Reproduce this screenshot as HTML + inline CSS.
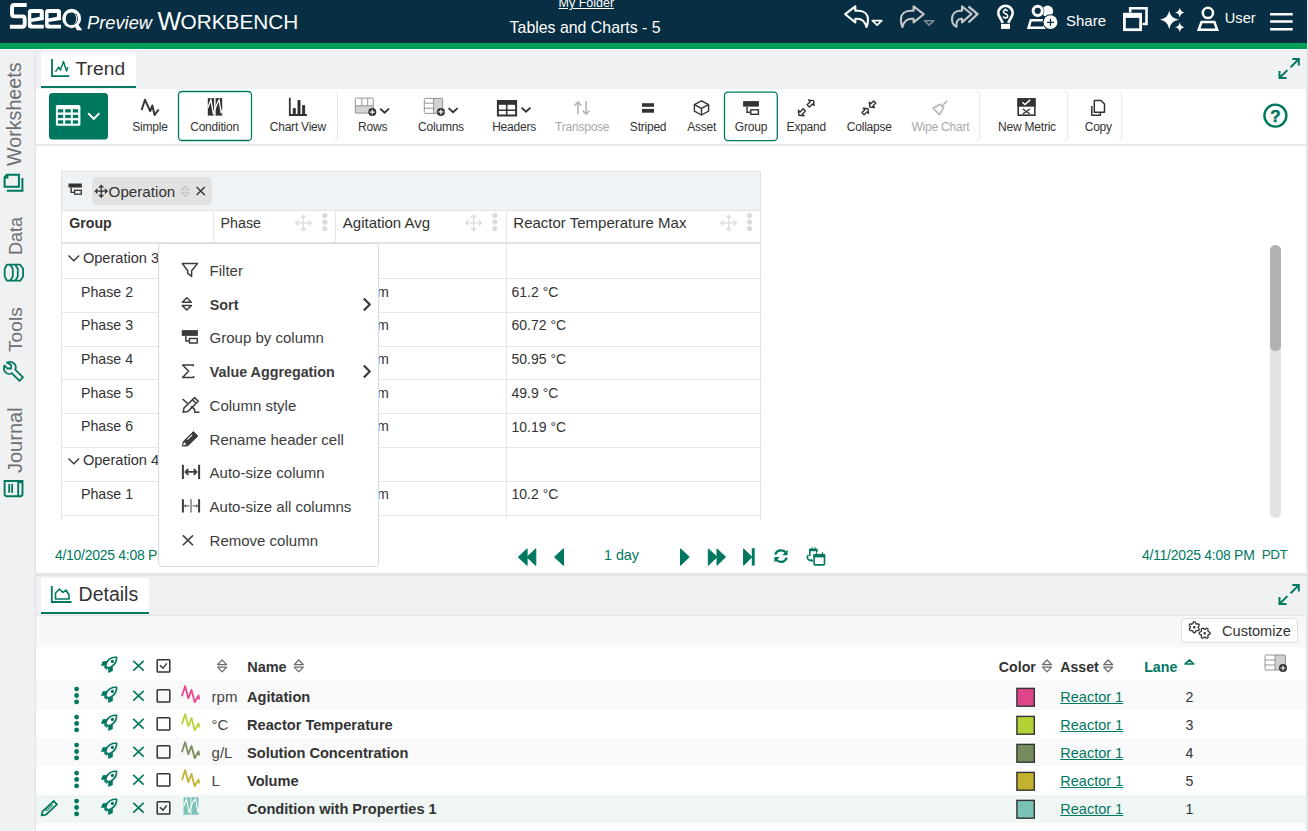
<!DOCTYPE html><html><head><meta charset="utf-8"><style>
html,body{margin:0;padding:0;}
body{width:1308px;height:831px;position:relative;overflow:hidden;background:#fff;font-family:"Liberation Sans",sans-serif;}
.t{position:absolute;white-space:nowrap;}
.r{position:absolute;}
</style></head><body>
<div class="r" style="left:0px;top:0px;width:1308px;height:831px;background:#f0f1f3"></div>
<div class="r" style="left:0px;top:0px;width:1307px;height:42.5px;background:#072e42"></div>
<div class="r" style="left:0px;top:42.5px;width:1307px;height:6.5px;background:#00a059"></div>
<div class="r" style="left:0px;top:49px;width:1308px;height:1px;background:#fff"></div>
<div class="r" style="left:35px;top:50px;width:1px;height:781px;background:#dfe1e4"></div>
<div class="r" style="left:41px;top:52px;width:95px;height:36px;background:#fff"></div>
<div class="r" style="left:41px;top:86px;width:95px;height:2px;background:#00785f"></div>
<div class="r" style="left:36px;top:89px;width:1270px;height:483.5px;background:#fff"></div>
<div class="r" style="left:36px;top:144px;width:1270px;height:2px;background:#e6e7e9"></div>
<div class="r" style="left:1306px;top:50px;width:2px;height:781px;background:#e6e6e6"></div>
<div class="r" style="left:1307px;top:0px;width:1px;height:50px;background:#e6e6e6"></div>
<div class="r" style="left:36px;top:572.5px;width:1270px;height:3.5px;background:#e4e5e7"></div>
<div class="r" style="left:41px;top:578px;width:108px;height:35px;background:#fff"></div>
<div class="r" style="left:41px;top:612px;width:108px;height:2.2px;background:#00785f"></div>
<div class="r" style="left:36px;top:614.5px;width:1269px;height:1px;background:#e3e4e6"></div>
<div class="r" style="left:36px;top:615.5px;width:1270px;height:31.5px;background:#f8f8f8"></div>
<div class="r" style="left:36px;top:647px;width:1269px;height:184px;background:#fff"></div>
<div class="r" style="left:36px;top:681px;width:1270px;height:28.5px;background:#f9f9f9"></div>
<div class="r" style="left:36px;top:737.7px;width:1270px;height:28.4px;background:#f9f9f9"></div>
<div class="r" style="left:36px;top:794.6px;width:1270px;height:28.1px;background:#eff6f4"></div>
<div class="t" style="top:13.91px;font-size:18.3px;line-height:18.3px;color:#fff;font-style:italic;left:87px;">Preview</div>
<div class="t" style="top:8.84px;font-size:25px;line-height:25px;color:#fff;left:157.5px;">W</div>
<div class="t" style="top:12.39px;font-size:20.8px;line-height:20.8px;color:#fff;left:180.5px;">ORKBENCH</div>
<div class="t" style="top:-2.58px;font-size:12.5px;line-height:12.5px;color:#fff;left:558.5px;"><u>My Folder</u></div>
<div class="t" style="top:20.24px;font-size:15.9px;line-height:15.9px;color:#fff;left:509.6px;">Tables and Charts - 5</div>
<div class="t" style="top:13.30px;font-size:15px;line-height:15px;color:#fff;left:1066px;">Share</div>
<div class="t" style="top:11.44px;font-size:14.6px;line-height:14.6px;color:#fff;left:1224.8px;">User</div>
<div class="t" style="top:59.35px;font-size:19.2px;line-height:19.2px;color:#333333;letter-spacing:0.1px;left:75.4px;">Trend</div>
<div class="t" style="top:584.99px;font-size:19.5px;line-height:19.5px;color:#333333;left:78.6px;">Details</div>
<div class="t" style="top:121.04px;font-size:12px;line-height:12px;color:#333333;letter-spacing:-0.22px;left:100.00px;width:100px;text-align:center;">Simple</div>
<div class="t" style="top:121.04px;font-size:12px;line-height:12px;color:#333333;letter-spacing:-0.22px;left:164.60px;width:100px;text-align:center;">Condition</div>
<div class="t" style="top:121.04px;font-size:12px;line-height:12px;color:#333333;letter-spacing:-0.22px;left:247.90px;width:100px;text-align:center;">Chart View</div>
<div class="t" style="top:121.04px;font-size:12px;line-height:12px;color:#333333;letter-spacing:-0.22px;left:322.70px;width:100px;text-align:center;">Rows</div>
<div class="t" style="top:121.04px;font-size:12px;line-height:12px;color:#333333;letter-spacing:-0.22px;left:391.00px;width:100px;text-align:center;">Columns</div>
<div class="t" style="top:121.04px;font-size:12px;line-height:12px;color:#333333;letter-spacing:-0.22px;left:464.10px;width:100px;text-align:center;">Headers</div>
<div class="t" style="top:121.04px;font-size:12px;line-height:12px;color:#a8a8a8;letter-spacing:-0.22px;left:532.20px;width:100px;text-align:center;">Transpose</div>
<div class="t" style="top:121.04px;font-size:12px;line-height:12px;color:#333333;letter-spacing:-0.22px;left:598.10px;width:100px;text-align:center;">Striped</div>
<div class="t" style="top:121.04px;font-size:12px;line-height:12px;color:#333333;letter-spacing:-0.22px;left:651.70px;width:100px;text-align:center;">Asset</div>
<div class="t" style="top:121.04px;font-size:12px;line-height:12px;color:#333333;letter-spacing:-0.22px;left:701.00px;width:100px;text-align:center;">Group</div>
<div class="t" style="top:121.04px;font-size:12px;line-height:12px;color:#333333;letter-spacing:-0.22px;left:756.30px;width:100px;text-align:center;">Expand</div>
<div class="t" style="top:121.04px;font-size:12px;line-height:12px;color:#333333;letter-spacing:-0.22px;left:819.30px;width:100px;text-align:center;">Collapse</div>
<div class="t" style="top:121.04px;font-size:12px;line-height:12px;color:#a8a8a8;letter-spacing:-0.22px;left:890.40px;width:100px;text-align:center;">Wipe Chart</div>
<div class="t" style="top:121.04px;font-size:12px;line-height:12px;color:#333333;letter-spacing:-0.22px;left:977.00px;width:100px;text-align:center;">New Metric</div>
<div class="t" style="top:121.04px;font-size:12px;line-height:12px;color:#333333;letter-spacing:-0.22px;left:1048.30px;width:100px;text-align:center;">Copy</div>

<svg class="r" style="left:0px;top:0px" width="1308" height="50" viewBox="0 0 1308 50">
<g fill="none" stroke="#fff" stroke-width="3.9">
<path d="M26.7,5.05 L14.5,5.05 Q12.05,5.05 12.05,7.5 L12.05,13.9 Q12.05,16.35 14.5,16.35 L22.25,16.35 Q24.7,16.35 24.7,18.8 L24.7,24.3 Q24.7,26.75 22.25,26.75 L9.9,26.75"/>
</g>
<g fill="#fff" fill-rule="evenodd">
<path d="M43.8,28.5 L30.9,28.5 Q27.9,28.5 27.9,25.5 L27.9,12 Q27.9,9 30.9,9 L40.8,9 Q43.8,9 43.8,12 L43.8,19.9 L31.3,21.9 L31.3,23 Q31.3,24.75 33,24.75 L43.8,24.75 Z M31.3,13 L39.75,13 L39.75,16.8 L31.3,18.5 Z"/>
<path transform="translate(17.2,0)" d="M43.8,28.5 L30.9,28.5 Q27.9,28.5 27.9,25.5 L27.9,12 Q27.9,9 30.9,9 L40.8,9 Q43.8,9 43.8,12 L43.8,19.9 L31.3,21.9 L31.3,23 Q31.3,24.75 33,24.75 L43.8,24.75 Z M31.3,13 L39.75,13 L39.75,16.8 L31.3,18.5 Z"/>
<ellipse cx="71.7" cy="18.5" rx="9.4" ry="9.7"/>
<path d="M74.5,25.5 L78.5,25 L82.4,30.2 L77,30.2 Z"/>
</g>
<ellipse cx="71.9" cy="18.7" rx="6.1" ry="6.3" fill="#072e42"/>
<path d="M70,12.6 A5,6.1 0 0 1 70,24.9 A4,6.1 0 0 0 70,12.6 Z" fill="#fff" transform="translate(2.2,0)"/>
<ellipse cx="69.9" cy="18.8" rx="4.05" ry="6.1" fill="#072e42"/>

<!-- undo -->
<path d="M845.2,14.2 L855.3,6.4 L855.3,10.8 L858.5,10.8 C864.5,10.8 868,14.5 868,19.5 C868,22.5 867.5,25 866.5,27 C865,21.5 862,18.8 857,18.8 L855.3,18.8 L855.3,22.4 Z" fill="none" stroke="#fff" stroke-width="2.1" stroke-linejoin="round"/>
<path d="M872.4,20.7 L881.8,20.7 L877.1,25.2 Z" fill="none" stroke="#fff" stroke-width="1.7" stroke-linejoin="round"/>
<!-- redo -->
<path transform="translate(1768.9,0) scale(-1,1)" d="M845.2,14.2 L855.3,6.4 L855.3,10.8 L858.5,10.8 C864.5,10.8 868,14.5 868,19.5 C868,22.5 867.5,25 866.5,27 C865,21.5 862,18.8 857,18.8 L855.3,18.8 L855.3,22.4 Z" fill="none" stroke="#c4c6c8" stroke-width="2.1" stroke-linejoin="round"/>
<path d="M924.4,20.7 L933.8,20.7 L929.1,25.2 Z" fill="none" stroke="#7d8a90" stroke-width="1.6" stroke-linejoin="round"/>
<!-- redo all -->
<path d="M971.5,14 L962,6.4 L962,10.8 L960,10.8 C955,10.8 952,14.5 952,19.5 C952,22.5 953,25 956.5,26.8 C956,21.5 958,18.8 961,18.8 L962,18.8 L962,22.4 Z" fill="none" stroke="#c4c6c8" stroke-width="2.1" stroke-linejoin="round"/>
<path d="M968.5,6.5 L977.5,14 L968.5,22.5" fill="none" stroke="#c4c6c8" stroke-width="2.3"/>
<!-- bulb -->
<path d="M1002.8,22.8 L999.6,16.9 A7.1,7.1 0 1 1 1011.4,16.9 L1008.2,22.8" fill="none" stroke="#fff" stroke-width="2.7"/>
<rect x="1001" y="23.9" width="9" height="5" fill="#fff"/>
<path d="M1007.7,11.2 C1007.2,10.3 1006.4,10 1005.5,10 C1004.2,10 1003.4,10.7 1003.4,11.8 C1003.4,14.1 1007.7,13.5 1007.7,15.9 C1007.7,17 1006.8,17.7 1005.5,17.7 C1004.5,17.7 1003.6,17.3 1003.1,16.5 M1005.5,8.6 V10 M1005.5,17.7 V19.1" fill="none" stroke="#fff" stroke-width="1.5"/>
<!-- share -->
<circle cx="1047.6" cy="11.2" r="5.6" fill="#fff"/>
<circle cx="1037.7" cy="10.85" r="6.6" fill="#072e42"/>
<circle cx="1037.7" cy="10.85" r="4.6" fill="none" stroke="#fff" stroke-width="3"/>
<path d="M1030.8,20.2 L1044,20.2 L1044.5,27.7 L1028.6,27.7 Z" fill="none" stroke="#fff" stroke-width="2.5"/>
<circle cx="1050.5" cy="22.2" r="8" fill="#072e42"/>
<circle cx="1050.5" cy="22.2" r="6.9" fill="#fff"/>
<path d="M1047.1,22.3 L1054,22.3 M1050.5,18.8 L1050.5,25.8" stroke="#072e42" stroke-width="1.3"/>
<!-- windows -->
<path d="M1130.2,12.5 L1130.2,8.3 L1146.5,8.3 L1146.5,24 L1142.5,24" fill="none" stroke="#fff" stroke-width="2.6"/>
<rect x="1124.4" y="14.3" width="16.2" height="15.4" fill="none" stroke="#fff" stroke-width="2.8"/>
<rect x="1123" y="12.9" width="19" height="5" fill="#fff"/>
<!-- sparkle -->
<path d="M1169.2,10.8 Q1170.5,18.4 1178.9,19.7 Q1170.5,21 1169.2,28.9 Q1167.9,21 1160,19.7 Q1167.9,18.4 1169.2,10.8 Z" fill="#fff"/>
<path d="M1179.8,7.5 Q1180.5,11.8 1184.8,12.5 Q1180.5,13.2 1179.8,17.5 Q1179.1,13.2 1174.8,12.5 Q1179.1,11.8 1179.8,7.5 Z" fill="#fff"/>
<path d="M1179.8,22.2 Q1180.5,26.5 1184.8,27.2 Q1180.5,27.9 1179.8,32.2 Q1179.1,27.9 1174.8,27.2 Q1179.1,26.5 1179.8,22.2 Z" fill="#fff"/>
<!-- user -->
<circle cx="1207.9" cy="12.9" r="5.1" fill="none" stroke="#fff" stroke-width="2.5"/>
<path d="M1201.5,22.1 L1214.4,22.1 L1217.2,29.8 L1198.7,29.8 Z" fill="none" stroke="#fff" stroke-width="2.5"/>
<!-- hamburger -->
<path d="M1270.1,14.3 H1292.7 M1270.1,21.5 H1292.7 M1270.1,29.2 H1292.7" stroke="#fff" stroke-width="2.6"/>
</svg>

<svg class="r" style="left:0px;top:0px" width="1308" height="150" viewBox="0 0 1308 150">
<!-- group right borders -->
<g fill="none" stroke="#e6e7e8" stroke-width="1">
<path d="M334.5,91.5 Q337.5,91.5 337.5,94.5 L337.5,137.5 Q337.5,140.5 334.5,140.5"/>
<path d="M976.5,91.5 Q979.5,91.5 979.5,94.5 L979.5,137.5 Q979.5,140.5 976.5,140.5"/>
<path d="M1064.5,91.5 Q1067.5,91.5 1067.5,94.5 L1067.5,137.5 Q1067.5,140.5 1064.5,140.5"/>
<path d="M1118.7,91.5 Q1121.7,91.5 1121.7,94.5 L1121.7,137.5 Q1121.7,140.5 1118.7,140.5"/>
</g>
<!-- green table button -->
<rect x="49" y="93" width="59" height="46.6" rx="3.5" fill="#00785f"/>
<rect x="55.9" y="105.1" width="24.5" height="20.6" rx="1.5" fill="#fff"/>
<g fill="#00785f">
<rect x="57.9" y="109.2" width="5.3" height="3.3"/><rect x="65.2" y="109.2" width="5.6" height="3.3"/><rect x="72.8" y="109.2" width="5.3" height="3.3"/>
<rect x="57.9" y="114.8" width="5.3" height="3.3"/><rect x="65.2" y="114.8" width="5.6" height="3.3"/><rect x="72.8" y="114.8" width="5.3" height="3.3"/>
<rect x="57.9" y="120.3" width="5.3" height="3.4"/><rect x="65.2" y="120.3" width="5.6" height="3.4"/><rect x="72.8" y="120.3" width="5.3" height="3.4"/>
</g>
<path d="M88.2,113.3 L93.8,118.8 L99.4,113.3" fill="none" stroke="#fff" stroke-width="1.9"/>
<!-- condition & group boxes -->
<rect x="178.5" y="91.5" width="73" height="49" rx="3.5" fill="none" stroke="#00785f" stroke-width="1.3"/>
<rect x="724.5" y="92.2" width="52.8" height="48.4" rx="3.5" fill="none" stroke="#00785f" stroke-width="1.3"/>
<!-- simple -->
<path d="M141.6,110 L145,99.8 L150.2,111.2 L152.3,105.5 L154.6,115 L158.6,109.5" fill="none" stroke="#333" stroke-width="2" stroke-linejoin="round"/>
<!-- condition icon -->
<rect x="207.8" y="98.1" width="6.3" height="17.5" fill="#333"/>
<rect x="215.6" y="98.1" width="6.6" height="17.5" fill="#333"/>
<path d="M207.8,108 L210.9,99.8 L213.3,113.4 L217,104 L219,99.8 L221.3,113.4 L222.2,110" fill="none" stroke="#fff" stroke-width="1.3"/>
<!-- chart view -->
<path d="M289.8,97.8 L289.8,115 L306.9,115" fill="none" stroke="#333" stroke-width="1.8"/>
<rect x="292.8" y="107.9" width="3" height="6.5" rx="0.8" fill="#333"/>
<rect x="297.5" y="99.9" width="3" height="14.5" rx="0.8" fill="#333"/>
<rect x="302.1" y="104.9" width="3" height="9.5" rx="0.8" fill="#333"/>
<!-- rows -->
<rect x="355.3" y="105.8" width="18" height="7.3" fill="#d3d3d3"/>
<rect x="355.3" y="98.1" width="18" height="15" rx="1" fill="none" stroke="#8a8a8a" stroke-width="0.9"/>
<path d="M355.3,105.8 H373.3 M361.8,98.1 V105.8 M367.7,98.1 V105.8" stroke="#8a8a8a" stroke-width="0.9"/>
<circle cx="372.3" cy="112.1" r="4" fill="#333"/>
<path d="M369.8,112.1 H374.8 M372.3,109.6 V114.6" stroke="#fff" stroke-width="1.1"/>
<path d="M380.2,108.6 L384.6,112.6 L389,108.6" fill="none" stroke="#333" stroke-width="1.9"/>
<!-- columns -->
<rect x="433.6" y="98.4" width="9" height="15" fill="#d3d3d3"/>
<rect x="424.3" y="98.4" width="18.3" height="15" rx="1" fill="none" stroke="#8a8a8a" stroke-width="0.9"/>
<path d="M424.3,103.2 H433.6 M424.3,108.2 H433.6 M433.6,98.4 V113.4" stroke="#8a8a8a" stroke-width="0.9"/>
<circle cx="440.9" cy="111.9" r="4" fill="#333"/>
<path d="M438.4,111.9 H443.4 M440.9,109.4 V114.4" stroke="#fff" stroke-width="1.1"/>
<path d="M448.6,108.1 L453.1,112.3 L457.6,108.1" fill="none" stroke="#333" stroke-width="1.9"/>
<!-- headers -->
<rect x="497.9" y="101" width="18.2" height="14.5" fill="none" stroke="#333" stroke-width="2"/>
<rect x="497" y="100" width="20" height="4.8" fill="#333"/>
<path d="M497.9,110.3 H516.1 M506.7,104 V115.5" stroke="#333" stroke-width="1.6"/>
<path d="M521.5,107.6 L526,111.8 L530.5,107.6" fill="none" stroke="#333" stroke-width="1.9"/>
<!-- transpose -->
<g fill="none" stroke="#b5b5b5" stroke-width="1.6">
<path d="M578,114.6 V102 M574.6,105.6 L578,102 L581.4,105.6"/>
<path d="M586.1,100.9 V114 M582.7,110.6 L586.1,114.2 L589.5,110.6"/>
</g>
<!-- striped -->
<rect x="642" y="103.2" width="12" height="3.6" fill="#333"/>
<rect x="642" y="108.9" width="12" height="3.8" fill="#333"/>
<!-- asset cube -->
<g fill="none" stroke="#333" stroke-width="1.4" stroke-linejoin="round">
<path d="M701.5,100.8 L708.6,104.6 L708.6,111.2 L701.5,115 L694.4,111.2 L694.4,104.6 Z"/>
<path d="M694.4,104.6 L701.5,108.3 L708.6,104.6 M701.5,108.3 V115"/>
</g>
<!-- group -->
<rect x="743.1" y="101.1" width="15.8" height="5.5" fill="#333"/>
<path d="M747,106.6 V112.2 H750.3" fill="none" stroke="#333" stroke-width="1.4"/>
<rect x="750.8" y="109.8" width="7.6" height="4.5" fill="none" stroke="#333" stroke-width="1.4"/>
<!-- expand -->
<g fill="none" stroke="#333" stroke-width="1.4" stroke-linejoin="round">
<path d="M807.09,104.84 L810.21,101.73 L808.58,100.11 L813.60,100.60 L814.09,105.62 L812.47,103.99 L809.36,107.11 Z"/>
<path d="M805.41,111.06 L802.29,114.17 L803.92,115.79 L798.90,115.30 L798.41,110.28 L800.03,111.91 L803.14,108.79 Z"/>
</g>
<!-- collapse -->
<g fill="none" stroke="#333" stroke-width="1.4" stroke-linejoin="round">
<path d="M875.81,103.11 L872.98,105.94 L874.54,107.49 L869.80,107.00 L869.31,102.26 L870.86,103.82 L873.69,100.99 Z"/>
<path d="M861.99,112.59 L864.82,109.76 L863.26,108.21 L868.00,108.70 L868.49,113.44 L866.94,111.88 L864.11,114.71 Z"/>
</g>
<!-- wipe chart -->
<g fill="none" stroke="#b5b5b5" stroke-width="1.6" stroke-linejoin="round">
<path d="M947.2,100.8 L941.6,106.6"/>
<path d="M940.2,104.2 L943.6,107.6 L939.6,114.6 L933,108.2 Z"/>
</g>
<!-- new metric -->
<rect x="1018.2" y="99" width="16.6" height="16.2" fill="none" stroke="#333" stroke-width="1.6"/>
<rect x="1017.4" y="98.2" width="18.2" height="8.5" fill="#333"/>
<path d="M1022.4,102.2 L1025,104.6 L1030.2,99.9" fill="none" stroke="#fff" stroke-width="1.5"/>
<path d="M1022.8,109 L1030,114 M1030,109 L1022.8,114" stroke="#333" stroke-width="1.4"/>
<!-- copy -->
<g fill="none" stroke="#333" stroke-width="1.5" stroke-linejoin="round">
<path d="M1094.3,100.5 L1101,100.5 L1104.5,104 L1104.5,112.2 L1094.3,112.2 Z"/>
<path d="M1091.8,106 L1091.8,115.2 L1100.4,115.2 L1100.4,112.2"/>
</g>
<!-- help -->
<circle cx="1275.4" cy="115.6" r="11" fill="none" stroke="#00785f" stroke-width="2.4"/>
<text x="1275.4" y="121.8" font-family="Liberation Sans" font-weight="700" font-size="17" fill="#00785f" stroke="#00785f" stroke-width="0.5" text-anchor="middle">?</text>
<!-- trend tab icon -->
<path d="M52,59 V76.1 H69.4" fill="none" stroke="#00785f" stroke-width="1.8"/>
<path d="M55.5,72 L58.5,67 L60.5,70 L63.5,61.5 L66.5,71 L67.8,67" fill="none" stroke="#00785f" stroke-width="1.4" stroke-linejoin="round"/>
<!-- expand trend panel -->
<g fill="none" stroke="#00785f" stroke-width="2">
<path d="M1290.6,67.2 L1298.2,59.6 M1292.3,59 H1298.8 V65.5"/>
<path d="M1287.4,70.1 L1280,77.5 M1279.5,71 V78 H1286.5"/>
</g>
</svg>
<div class="t" style="left:5.32px;top:166.40px;font-size:19.7px;line-height:19.7px;color:#6d6f72;transform:rotate(-90deg);transform-origin:0 0;">Worksheets</div>
<div class="t" style="left:6.76px;top:255.20px;font-size:18px;line-height:18px;color:#6d6f72;transform:rotate(-90deg);transform-origin:0 0;">Data</div>
<div class="t" style="left:5.75px;top:351.80px;font-size:19.2px;line-height:19.2px;color:#6d6f72;transform:rotate(-90deg);transform-origin:0 0;">Tools</div>
<div class="t" style="left:5.07px;top:473.20px;font-size:20px;line-height:20px;color:#6d6f72;transform:rotate(-90deg);transform-origin:0 0;">Journal</div>

<svg class="r" style="left:0px;top:0px" width="36" height="520" viewBox="0 0 36 520">
<g fill="none" stroke="#00785f" stroke-width="2">
<path d="M6.9,174.7 L18.9,174.7 L18.9,186.7 L4.6,186.7 L4.6,177.2 Z"/>
<path d="M4.6,177.6 L7.6,177.6 L7.6,174.6" stroke-width="1.6"/>
<path d="M22.4,177.9 V190.8 H6.9"/>
</g>
<g fill="none" stroke="#00785f" stroke-width="1.8" stroke-linejoin="round">
<path d="M6.9,264.7 L20.2,264.7 L23.1,268.8 L23.1,276.4 L20.2,280.7 L6.9,280.7 L4.7,276.4 L4.7,268.8 Z"/>
<path d="M10.2,264.7 L12.8,268.8 L12.8,276.4 L10.2,280.7 M15.2,264.7 L17.8,268.8 L17.8,276.4 L15.2,280.7"/>
</g>
<path d="M7,362.6 C10.5,361.2 14.5,362.2 15.5,365.5 C16.2,367.3 15.8,368.8 15.2,369.6 L23,377.4 L19.5,380.9 L11.8,373.2 C9.5,374.5 6.5,373.8 5,371.8 C3.9,370.2 3.8,367.5 4.4,365.4 L7.3,368.5 L11.1,368.5 L11.1,365 Z" fill="none" stroke="#00785f" stroke-width="1.8" stroke-linejoin="round"/>
<g fill="none" stroke="#00785f" stroke-width="1.9">
<path d="M4.6,481 L22.5,481 L22.5,494 Q22.5,496.2 20.3,496.2 L6.8,496.2 Q4.6,496.2 4.6,494 Z"/>
<path d="M18.2,481 V496.2 M18.2,482.4 H22.5"/>
</g>
<rect x="8.3" y="483.9" width="1.8" height="8.9" fill="#00785f"/>
<rect x="11.2" y="483.9" width="1.8" height="8.9" fill="#00785f"/>
</svg>
<div class="r" style="left:61px;top:171px;width:700px;height:39.5px;background:#eff3f6;border:1px solid #e0e3e6;border-bottom:none;box-sizing:border-box"></div>
<div class="r" style="left:61px;top:210px;width:700px;height:1px;background:#e1e4e8"></div>
<div class="r" style="left:92px;top:177px;width:120.2px;height:27.6px;background:#e2e2e3;border-radius:5px"></div>
<div class="r" style="left:61px;top:242px;width:700px;height:1.5px;background:#e1e3e6"></div>
<div class="r" style="left:213.3px;top:210.5px;width:1px;height:308.5px;background:#e6e7e9"></div>
<div class="r" style="left:335.4px;top:210.5px;width:1px;height:308.5px;background:#e6e7e9"></div>
<div class="r" style="left:505.5px;top:210.5px;width:1px;height:308.5px;background:#e6e7e9"></div>
<div class="r" style="left:61px;top:210.5px;width:1px;height:308.5px;background:#e0e2e5"></div>
<div class="r" style="left:760px;top:210.5px;width:1px;height:308.5px;background:#e0e2e5"></div>
<div class="r" style="left:61px;top:278.0px;width:700px;height:1px;background:#e6e7e9"></div>
<div class="r" style="left:61px;top:311.8px;width:700px;height:1px;background:#e6e7e9"></div>
<div class="r" style="left:61px;top:345.6px;width:700px;height:1px;background:#e6e7e9"></div>
<div class="r" style="left:61px;top:379.4px;width:700px;height:1px;background:#e6e7e9"></div>
<div class="r" style="left:61px;top:413.2px;width:700px;height:1px;background:#e6e7e9"></div>
<div class="r" style="left:61px;top:447.0px;width:700px;height:1px;background:#e6e7e9"></div>
<div class="r" style="left:61px;top:480.79999999999995px;width:700px;height:1px;background:#e6e7e9"></div>
<div class="r" style="left:61px;top:514.5999999999999px;width:700px;height:1px;background:#e6e7e9"></div>
<div class="t" style="top:183.83px;font-size:15.2px;line-height:15.2px;color:#333333;left:108.6px;">Operation</div>
<div class="t" style="top:215.58px;font-size:14.2px;line-height:14.2px;color:#333333;font-weight:700;left:69.2px;">Group</div>
<div class="t" style="top:215.54px;font-size:14.25px;line-height:14.25px;color:#333333;left:220.6px;">Phase</div>
<div class="t" style="top:214.90px;font-size:15px;line-height:15px;color:#333333;left:342.8px;">Agitation Avg</div>
<div class="t" style="top:214.90px;font-size:15px;line-height:15px;color:#333333;left:513.3px;">Reactor Temperature Max</div>
<div class="t" style="top:250.54px;font-size:14.6px;line-height:14.6px;color:#333333;left:82.9px;">Operation 3</div>
<div class="t" style="top:284.58px;font-size:14.2px;line-height:14.2px;color:#333333;left:81px;">Phase 2</div>
<div class="t" style="top:284.75px;font-size:14px;line-height:14px;color:#333333;left:511.5px;">61.2 °C</div>
<div class="t" style="top:284.58px;font-size:14.2px;line-height:14.2px;color:#333333;left:364.4px;">rpm</div>
<div class="t" style="top:318.28px;font-size:14.2px;line-height:14.2px;color:#333333;left:81px;">Phase 3</div>
<div class="t" style="top:318.45px;font-size:14px;line-height:14px;color:#333333;left:511.5px;">60.72 °C</div>
<div class="t" style="top:318.28px;font-size:14.2px;line-height:14.2px;color:#333333;left:364.4px;">rpm</div>
<div class="t" style="top:351.98px;font-size:14.2px;line-height:14.2px;color:#333333;left:81px;">Phase 4</div>
<div class="t" style="top:352.15px;font-size:14px;line-height:14px;color:#333333;left:511.5px;">50.95 °C</div>
<div class="t" style="top:351.98px;font-size:14.2px;line-height:14.2px;color:#333333;left:364.4px;">rpm</div>
<div class="t" style="top:385.68px;font-size:14.2px;line-height:14.2px;color:#333333;left:81px;">Phase 5</div>
<div class="t" style="top:385.85px;font-size:14px;line-height:14px;color:#333333;left:511.5px;">49.9 °C</div>
<div class="t" style="top:385.68px;font-size:14.2px;line-height:14.2px;color:#333333;left:364.4px;">rpm</div>
<div class="t" style="top:419.38px;font-size:14.2px;line-height:14.2px;color:#333333;left:81px;">Phase 6</div>
<div class="t" style="top:419.55px;font-size:14px;line-height:14px;color:#333333;left:511.5px;">10.19 °C</div>
<div class="t" style="top:419.38px;font-size:14.2px;line-height:14.2px;color:#333333;left:364.4px;">rpm</div>
<div class="t" style="top:452.74px;font-size:14.6px;line-height:14.6px;color:#333333;left:82.9px;">Operation 4</div>
<div class="t" style="top:486.78px;font-size:14.2px;line-height:14.2px;color:#333333;left:81px;">Phase 1</div>
<div class="t" style="top:486.95px;font-size:14px;line-height:14px;color:#333333;left:511.5px;">10.2 °C</div>
<div class="t" style="top:486.78px;font-size:14.2px;line-height:14.2px;color:#333333;left:364.4px;">rpm</div>

<svg class="r" style="left:0px;top:160px" width="780" height="100" viewBox="0 160 780 100">
<rect x="68.5" y="183.5" width="13.3" height="4" fill="#333"/>
<path d="M71.2,187.5 V192.4 H74" fill="none" stroke="#333" stroke-width="1.4"/>
<rect x="74.6" y="190.3" width="6.7" height="3.9" fill="none" stroke="#333" stroke-width="1.3"/>
<g fill="none" stroke="#333" stroke-width="1.3">
<path d="M101.2,185.3 V197.2 M95.3,191.2 H107.1 M99,187.6 L101.2,185.4 L103.4,187.6 M99,194.9 L101.2,197.1 L103.4,194.9 M97.5,189 L95.3,191.2 L97.5,193.4 M104.9,189 L107.1,191.2 L104.9,193.4"/>
</g>
<g fill="none" stroke="#c4c4c4" stroke-width="1.1">
<path d="M181.5,190 L185.3,186 L189.1,190 Z M181.5,192.5 L185.3,196.5 L189.1,192.5 Z"/>
</g>
<path d="M196.6,187 L204.8,195 M204.8,187 L196.6,195" stroke="#333" stroke-width="1.4"/>
<g fill="none" stroke="#d9dbde" stroke-width="1.3"><path d="M303.4,215.2 V230.6 M295.7,222.9 H311.09999999999997 M300.79999999999995,217.8 L303.4,215.2 L306.0,217.8 M300.79999999999995,228 L303.4,230.6 L306.0,228 M298.29999999999995,220.3 L295.7,222.9 L298.29999999999995,225.5 M308.5,220.3 L311.09999999999997,222.9 L308.5,225.5"/></g><g fill="none" stroke="#d9dbde" stroke-width="1.3"><path d="M473.6,215.2 V230.6 M465.90000000000003,222.9 H481.3 M471.0,217.8 L473.6,215.2 L476.20000000000005,217.8 M471.0,228 L473.6,230.6 L476.20000000000005,228 M468.5,220.3 L465.90000000000003,222.9 L468.5,225.5 M478.70000000000005,220.3 L481.3,222.9 L478.70000000000005,225.5"/></g><g fill="none" stroke="#d9dbde" stroke-width="1.3"><path d="M728.6,215.2 V230.6 M720.9,222.9 H736.3000000000001 M726.0,217.8 L728.6,215.2 L731.2,217.8 M726.0,228 L728.6,230.6 L731.2,228 M723.5,220.3 L720.9,222.9 L723.5,225.5 M733.7,220.3 L736.3000000000001,222.9 L733.7,225.5"/></g><g fill="#d9dbde"><circle cx="324.9" cy="215.6" r="2.6"/><circle cx="324.9" cy="222.1" r="2.6"/><circle cx="324.9" cy="228.6" r="2.6"/></g><g fill="#d9dbde"><circle cx="494.8" cy="215.6" r="2.6"/><circle cx="494.8" cy="222.1" r="2.6"/><circle cx="494.8" cy="228.6" r="2.6"/></g><g fill="#d9dbde"><circle cx="749.6" cy="215.6" r="2.6"/><circle cx="749.6" cy="222.1" r="2.6"/><circle cx="749.6" cy="228.6" r="2.6"/></g></svg>
<svg class="r" style="left:0px;top:240px" width="200" height="240" viewBox="0 240 200 240">
<path d="M68.5,255.5 L73.8,260.8 L79.1,255.5 M68.5,458.5 L73.8,463.8 L79.1,458.5" fill="none" stroke="#333" stroke-width="1.3"/>
</svg>
<div class="r" style="left:1269.7px;top:244.7px;width:11.3px;height:273.6px;background:#e3e3e3;border-radius:6px"></div>
<div class="r" style="left:1269.7px;top:244.7px;width:11.3px;height:106px;background:#b2b2b2;border-radius:6px"></div>
<div class="r" style="left:158px;top:242.6px;width:220.5px;height:324.6px;background:#fff;border:1px solid #d7dbe0;border-radius:4px;box-sizing:border-box;z-index:5"></div>
<div class="t" style="top:263.00px;font-size:15px;line-height:15px;color:#3c3c3c;left:209.6px;z-index:6">Filter</div>
<div class="t" style="top:297.60px;font-size:14.3px;line-height:14.3px;color:#3c3c3c;font-weight:700;left:209.8px;z-index:6">Sort</div>
<div class="t" style="top:330.20px;font-size:15px;line-height:15px;color:#3c3c3c;left:209.6px;z-index:6">Group by column</div>
<div class="t" style="top:364.80px;font-size:14.3px;line-height:14.3px;color:#3c3c3c;font-weight:700;left:209.8px;z-index:6">Value Aggregation</div>
<div class="t" style="top:397.70px;font-size:15px;line-height:15px;color:#3c3c3c;left:209.6px;z-index:6">Column style</div>
<div class="t" style="top:432.20px;font-size:15px;line-height:15px;color:#3c3c3c;left:209.6px;z-index:6">Rename header cell</div>
<div class="t" style="top:465.20px;font-size:15px;line-height:15px;color:#3c3c3c;left:209.6px;z-index:6">Auto-size column</div>
<div class="t" style="top:498.70px;font-size:15px;line-height:15px;color:#3c3c3c;left:209.6px;z-index:6">Auto-size all columns</div>
<div class="t" style="top:533.20px;font-size:15px;line-height:15px;color:#3c3c3c;left:209.6px;z-index:6">Remove column</div>
<svg class="r" style="left:150px;top:240px;z-index:6" width="240" height="320" viewBox="150 240 240 320">
<g fill="none" stroke="#3c3c3c" stroke-width="1.5" stroke-linejoin="round">
<path d="M182.4,263.6 L197.4,263.6 L191.6,270.8 L191.6,276.4 L187.7,273.3 L187.7,270.8 Z"/>
<path d="M186.8,297.8 L191.3,302.2 L182.3,302.2 Z M182.3,305.6 L191.3,305.6 L186.8,310 Z"/>
<path d="M363.8,298.5 L369.8,304.5 L363.8,310.5 M363.8,365.5 L369.8,371.5 L363.8,377.5" stroke-width="2.3"/>
<path d="M193.4,366.2 V364.9 H182.6 L188.6,371.3 L182.6,377.6 H193.6 V376.1"/>
<path d="M185.9,335.9 V341 H188.7"/>
<rect x="189.4" y="338.6" width="7.9" height="4.5"/>
<path d="M183.2,412.2 L184,408 L194.6,397.6 L198.3,401.3 L187.7,411.6 Z M192.5,399.7 L196.2,403.4"/>
<path d="M182.6,399 L187.5,403.4 M190.8,406.5 C193.5,407.5 195,409.5 194.8,412.2 H199.5"/>
<path d="M182.4,446.1 L183.4,441.4 L193.4,431.6 L197.8,436 L187.8,445.8 Z" fill="#3c3c3c" stroke-width="1"/>
<path d="M182.9,445.6 L184.2,442.2 L186.4,444.3 Z" fill="#fff" stroke="none"/>
<path d="M187.4,439.6 L192.2,434.9" stroke="#fff" stroke-width="1.1"/>
<path d="M182.8,535.4 L193,545.3 M193,535.4 L182.8,545.3"/>
</g>
<rect x="181.8" y="330.1" width="16.1" height="5.8" fill="#3c3c3c"/>
<path d="M182.9,464.8 V479 M199.1,464.8 V479" stroke="#3c3c3c" stroke-width="2"/>
<path d="M185.5,471.9 H196.5 M188.3,469 L185.5,471.9 L188.3,474.8 M193.7,469 L196.5,471.9 L193.7,474.8" fill="none" stroke="#3c3c3c" stroke-width="1.8"/>
<path d="M182.9,499.2 V512.6 M199.1,499.2 V512.6" stroke="#3c3c3c" stroke-width="2"/>
<path d="M191,499.2 V512.6" stroke="#3c3c3c" stroke-width="1"/>
<path d="M184.5,505.9 H189.5 M192.5,505.9 H197.5 M186,504.6 L184.5,505.9 L186,507.2 M196,504.6 L197.5,505.9 L196,507.2" fill="none" stroke="#3c3c3c" stroke-width="0.9"/>
</svg>
<div class="t" style="top:547.95px;font-size:14px;line-height:14px;color:#00785f;letter-spacing:-0.28px;left:54.9px;">4/10/2025 4:08 PM</div>
<div class="t" style="top:548.20px;font-size:14.3px;line-height:14.3px;color:#00785f;left:581.50px;width:80px;text-align:center;">1 day</div>
<div class="t" style="top:547.85px;font-size:14px;line-height:14px;color:#00785f;letter-spacing:-0.28px;left:1142px;">4/11/2025 4:08 PM</div>
<div class="t" style="top:548.27px;font-size:13.5px;line-height:13.5px;color:#00785f;letter-spacing:-0.5px;right:20.80px;text-align:right;">PDT</div>
<svg class="r" style="left:500px;top:540px" width="340" height="32" viewBox="500 540 340 32">
<g fill="#00785f" stroke="#00785f" stroke-width="1" stroke-linejoin="round">
<path d="M518.3,557.1 L527.1,548.8 L527.1,565.4 Z M527.1,557.1 L535.8,548.8 L535.8,565.4 Z"/>
<path d="M554.5,557.1 L563.5,548.8 L563.5,565.4 Z"/>
<path d="M689.3,556.9 L680.5,548.9 L680.5,565.3 Z"/>
<path d="M717,556.9 L708.3,548.9 L708.3,565.3 Z M725.6,556.9 L717,548.9 L717,565.3 Z"/>
<path d="M751.8,556.9 L743.6,548.9 L743.6,565.3 Z"/>
</g>
<rect x="751.8" y="548.2" width="2.9" height="17.3" fill="#00785f"/>
<g fill="none" stroke="#00785f" stroke-width="2.2">
<path d="M775.2,554.6 A6.3,6.3 0 0 1 786.2,552.8"/>
<path d="M786.8,557.6 A6.3,6.3 0 0 1 775.8,559.4"/>
</g>
<path d="M787.6,549.8 L787.6,555.3 L782.2,555.3 Z M774.4,562.4 L774.4,556.9 L779.8,556.9 Z" fill="#00785f"/>
<g fill="none" stroke="#00785f" stroke-width="1.6">
<rect x="814.1" y="555" width="10.4" height="9.9" rx="1"/>
<path d="M809.8,556.2 V549.8 H816.8 V552"/>
<path d="M808.2,555 C806.3,557.5 807.5,560.3 811.2,560.5"/>
</g>
<rect x="813.4" y="554.1" width="11.8" height="3.3" fill="#00785f"/>
<rect x="809.2" y="548.6" width="8" height="2.6" fill="#00785f"/>
<path d="M811,558.6 L813.3,560.6 L811,562.5 Z" fill="#00785f"/>
<path d="M816.5,552.2 V554.5 M822.5,552.2 V554.5 M812,547.6 V549 M815,547.6 V549" stroke="#00785f" stroke-width="1.3"/>
</svg>
<div class="t" style="top:659.73px;font-size:14.5px;line-height:14.5px;color:#333333;font-weight:700;left:247.2px;">Name</div>
<div class="t" style="top:659.98px;font-size:14.2px;line-height:14.2px;color:#333333;font-weight:700;left:998.8px;">Color</div>
<div class="t" style="top:659.98px;font-size:14.2px;line-height:14.2px;color:#333333;font-weight:700;left:1060.2px;">Asset</div>
<div class="t" style="top:659.98px;font-size:14.2px;line-height:14.2px;color:#00785f;font-weight:700;left:1144.2px;">Lane</div>
<div class="r" style="left:1181.4px;top:618.2px;width:117.1px;height:25.2px;background:#fff;border:1px solid #dcdfe3;border-radius:4px;box-sizing:border-box"></div>
<div class="t" style="top:624.44px;font-size:14.6px;line-height:14.6px;color:#333333;left:1222px;">Customize</div>
<div class="t" style="top:689.54px;font-size:14.6px;line-height:14.6px;color:#333333;font-weight:700;left:247px;">Agitation</div>
<div class="t" style="top:689.20px;font-size:15px;line-height:15px;color:#444;left:211.6px;">rpm</div>
<div class="t" style="top:689.63px;font-size:14.5px;line-height:14.5px;color:#00785f;left:1060.3px;"><u>Reactor 1</u></div>
<div class="t" style="top:689.88px;font-size:14.2px;line-height:14.2px;color:#333333;left:1169.50px;width:40px;text-align:center;">2</div>
<div class="t" style="top:717.54px;font-size:14.6px;line-height:14.6px;color:#333333;font-weight:700;left:247px;">Reactor Temperature</div>
<div class="t" style="top:717.20px;font-size:15px;line-height:15px;color:#444;left:211.6px;">°C</div>
<div class="t" style="top:717.63px;font-size:14.5px;line-height:14.5px;color:#00785f;left:1060.3px;"><u>Reactor 1</u></div>
<div class="t" style="top:717.88px;font-size:14.2px;line-height:14.2px;color:#333333;left:1169.50px;width:40px;text-align:center;">3</div>
<div class="t" style="top:745.54px;font-size:14.6px;line-height:14.6px;color:#333333;font-weight:700;left:247px;">Solution Concentration</div>
<div class="t" style="top:745.20px;font-size:15px;line-height:15px;color:#444;left:211.6px;">g/L</div>
<div class="t" style="top:745.63px;font-size:14.5px;line-height:14.5px;color:#00785f;left:1060.3px;"><u>Reactor 1</u></div>
<div class="t" style="top:745.88px;font-size:14.2px;line-height:14.2px;color:#333333;left:1169.50px;width:40px;text-align:center;">4</div>
<div class="t" style="top:773.54px;font-size:14.6px;line-height:14.6px;color:#333333;font-weight:700;left:247px;">Volume</div>
<div class="t" style="top:773.20px;font-size:15px;line-height:15px;color:#444;left:211.6px;">L</div>
<div class="t" style="top:773.63px;font-size:14.5px;line-height:14.5px;color:#00785f;left:1060.3px;"><u>Reactor 1</u></div>
<div class="t" style="top:773.88px;font-size:14.2px;line-height:14.2px;color:#333333;left:1169.50px;width:40px;text-align:center;">5</div>
<div class="t" style="top:801.54px;font-size:14.6px;line-height:14.6px;color:#333333;font-weight:700;left:247px;">Condition with Properties 1</div>
<div class="t" style="top:801.63px;font-size:14.5px;line-height:14.5px;color:#00785f;left:1060.3px;"><u>Reactor 1</u></div>
<div class="t" style="top:801.88px;font-size:14.2px;line-height:14.2px;color:#333333;left:1169.50px;width:40px;text-align:center;">1</div>
<svg class="r" style="left:0px;top:576px" width="1308" height="255" viewBox="0 576 1308 255"><path d="M51.8,586 V602 H71.5" fill="none" stroke="#00785f" stroke-width="1.8"/><path d="M55.5,599 V593 L59.5,589 L63,592.5 L66,590 L69,595 V599 Z" fill="none" stroke="#00785f" stroke-width="1.6" stroke-linejoin="round"/><g fill="none" stroke="#00785f" stroke-width="2"><path d="M1290.6,593.2 L1298.2,585.6 M1292.3,585 H1298.8 V591.5"/><path d="M1287.4,596.1 L1280,603.5 M1279.5,597 V604 H1286.5"/></g><g transform="translate(0,0)"><path d="M116.6,657.3 C112.8,657 109,658.8 106.8,662 L105.6,665.6 L107.9,668 L111.5,666.8 C114.8,664.6 116.8,661 116.6,657.3 Z" fill="none" stroke="#00785f" stroke-width="1.7" stroke-linejoin="round"/>
<path d="M100.9,665.8 L102.8,661.3 L107.4,661.1 L105.4,665.8 Z M108.3,672.9 L112.8,671 L112.8,666.4 L108.1,668.3 Z" fill="#00785f"/><path d="M104.3,666.5 L106.9,669.3" stroke="#00785f" stroke-width="1.6"/><circle cx="112.4" cy="661.4" r="1.6" fill="#00785f"/></g><path d="M133.3,660.8 L143.7,670.6 M143.7,660.8 L133.3,670.6" stroke="#00785f" stroke-width="1.6"/><rect x="157.2" y="659.8" width="12.6" height="12.2" rx="0.8" fill="none" stroke="#333" stroke-width="1.5"/><path d="M159.9,665.2 L163,668.2 L166.8,663.4" fill="none" stroke="#333" stroke-width="1.4"/><g fill="none" stroke="#6b6b6b" stroke-width="1.3" stroke-linejoin="round"><path d="M217.6,664.6999999999999 L222.1,659.9 L226.6,664.6999999999999 Z M217.6,667.1 L222.1,671.9 L226.6,667.1 Z"/></g><g fill="none" stroke="#6b6b6b" stroke-width="1.3" stroke-linejoin="round"><path d="M294.3,664.6999999999999 L298.8,659.9 L303.3,664.6999999999999 Z M294.3,667.1 L298.8,671.9 L303.3,667.1 Z"/></g><g fill="none" stroke="#6b6b6b" stroke-width="1.3" stroke-linejoin="round"><path d="M1042.5,664.6999999999999 L1047,659.9 L1051.5,664.6999999999999 Z M1042.5,667.1 L1047,671.9 L1051.5,667.1 Z"/></g><g fill="none" stroke="#6b6b6b" stroke-width="1.3" stroke-linejoin="round"><path d="M1103.7,664.6999999999999 L1108.2,659.9 L1112.7,664.6999999999999 Z M1103.7,667.1 L1108.2,671.9 L1112.7,667.1 Z"/></g><path d="M1185,664 L1189.4,659.8 L1193.8,664 Z" fill="none" stroke="#00785f" stroke-width="1.6" stroke-linejoin="round"/><rect x="1275" y="655" width="10.5" height="15" fill="#d0d0d0"/><rect x="1265" y="655" width="20.5" height="15" rx="1" fill="none" stroke="#8a8a8a" stroke-width="0.9"/><path d="M1265,660 H1275 M1265,665 H1275 M1275,655 V670" stroke="#8a8a8a" stroke-width="0.9"/><circle cx="1283" cy="668" r="4" fill="#333"/><path d="M1280.6,668 H1285.4 M1283,665.6 V670.4" stroke="#fff" stroke-width="1.1"/><g fill="none" stroke="#333" stroke-width="1.3" stroke-linejoin="round"><path d="M1198.25,627.30 L1198.23,627.64 L1198.41,628.02 L1198.84,628.52 L1199.21,629.09 L1199.24,629.60 L1199.02,630.02 L1198.76,630.43 L1198.30,630.66 L1197.62,630.62 L1196.98,630.50 L1196.57,630.54 L1196.27,630.72 L1195.97,630.88 L1195.73,631.22 L1195.52,631.84 L1195.21,632.45 L1194.77,632.73 L1194.30,632.75 L1193.83,632.73 L1193.39,632.45 L1193.08,631.84 L1192.87,631.22 L1192.63,630.88 L1192.33,630.72 L1192.03,630.54 L1191.62,630.50 L1190.98,630.62 L1190.30,630.66 L1189.84,630.43 L1189.58,630.02 L1189.36,629.60 L1189.39,629.09 L1189.76,628.52 L1190.19,628.02 L1190.37,627.64 L1190.35,627.30 L1190.37,626.96 L1190.19,626.58 L1189.76,626.08 L1189.39,625.51 L1189.36,625.00 L1189.58,624.57 L1189.84,624.17 L1190.30,623.94 L1190.98,623.98 L1191.62,624.10 L1192.03,624.06 L1192.33,623.88 L1192.63,623.72 L1192.87,623.38 L1193.08,622.76 L1193.39,622.15 L1193.83,621.87 L1194.30,621.85 L1194.77,621.87 L1195.21,622.15 L1195.52,622.76 L1195.73,623.38 L1195.97,623.72 L1196.27,623.88 L1196.57,624.06 L1196.98,624.10 L1197.62,623.98 L1198.30,623.94 L1198.76,624.17 L1199.02,624.57 L1199.24,625.00 L1199.21,625.51 L1198.84,626.08 L1198.41,626.58 L1198.23,626.96 L1198.25,627.30Z"/><path d="M1210.15,633.20 L1210.13,633.67 L1209.85,634.11 L1209.24,634.42 L1208.62,634.63 L1208.28,634.87 L1208.12,635.18 L1207.94,635.47 L1207.90,635.88 L1208.02,636.52 L1208.06,637.20 L1207.83,637.66 L1207.42,637.92 L1207.00,638.14 L1206.49,638.11 L1205.92,637.74 L1205.42,637.31 L1205.04,637.13 L1204.70,637.15 L1204.36,637.13 L1203.98,637.31 L1203.48,637.74 L1202.91,638.11 L1202.40,638.14 L1201.98,637.92 L1201.57,637.66 L1201.34,637.20 L1201.38,636.52 L1201.50,635.88 L1201.46,635.47 L1201.28,635.18 L1201.12,634.87 L1200.78,634.63 L1200.16,634.42 L1199.55,634.11 L1199.27,633.67 L1199.25,633.20 L1199.27,632.73 L1199.55,632.29 L1200.16,631.98 L1200.78,631.77 L1201.12,631.53 L1201.28,631.23 L1201.46,630.93 L1201.50,630.52 L1201.38,629.88 L1201.34,629.20 L1201.57,628.74 L1201.98,628.48 L1202.40,628.26 L1202.91,628.29 L1203.48,628.66 L1203.98,629.09 L1204.36,629.27 L1204.70,629.25 L1205.04,629.27 L1205.42,629.09 L1205.92,628.66 L1206.49,628.29 L1207.00,628.26 L1207.42,628.48 L1207.83,628.74 L1208.06,629.20 L1208.02,629.88 L1207.90,630.52 L1207.94,630.93 L1208.12,631.23 L1208.28,631.53 L1208.62,631.77 L1209.24,631.98 L1209.85,632.29 L1210.13,632.73 L1210.15,633.20Z"/></g><circle cx="1194.3" cy="627.3" r="1.2" fill="#333"/><circle cx="1204.7" cy="633.2" r="1.2" fill="#333"/><g transform="translate(0,30)"><path d="M116.6,657.3 C112.8,657 109,658.8 106.8,662 L105.6,665.6 L107.9,668 L111.5,666.8 C114.8,664.6 116.8,661 116.6,657.3 Z" fill="none" stroke="#00785f" stroke-width="1.7" stroke-linejoin="round"/>
<path d="M100.9,665.8 L102.8,661.3 L107.4,661.1 L105.4,665.8 Z M108.3,672.9 L112.8,671 L112.8,666.4 L108.1,668.3 Z" fill="#00785f"/><path d="M104.3,666.5 L106.9,669.3" stroke="#00785f" stroke-width="1.6"/><circle cx="112.4" cy="661.4" r="1.6" fill="#00785f"/></g><path d="M133.3,690.8 L143.7,700.6 M143.7,690.8 L133.3,700.6" stroke="#00785f" stroke-width="1.6"/><rect x="157.2" y="689.8" width="12.6" height="12.2" rx="0.8" fill="none" stroke="#333" stroke-width="1.5"/><g fill="#00785f"><circle cx="76.6" cy="689.1" r="2.4"/><circle cx="76.6" cy="695.5" r="2.4"/><circle cx="76.6" cy="701.9" r="2.4"/></g><rect x="1016.9" y="688.4" width="17.4" height="17.8" fill="#e0448b" stroke="#333" stroke-width="1.4"/><path d="M181.9,696.3000000000001 L185.1,686.1 L188.3,698.2 L191.5,689.9 L194.7,702.2 L198.5,695.5 L199.3,699.5" fill="none" stroke="#e8488e" stroke-width="1.8" stroke-linejoin="round"/><g transform="translate(0,58)"><path d="M116.6,657.3 C112.8,657 109,658.8 106.8,662 L105.6,665.6 L107.9,668 L111.5,666.8 C114.8,664.6 116.8,661 116.6,657.3 Z" fill="none" stroke="#00785f" stroke-width="1.7" stroke-linejoin="round"/>
<path d="M100.9,665.8 L102.8,661.3 L107.4,661.1 L105.4,665.8 Z M108.3,672.9 L112.8,671 L112.8,666.4 L108.1,668.3 Z" fill="#00785f"/><path d="M104.3,666.5 L106.9,669.3" stroke="#00785f" stroke-width="1.6"/><circle cx="112.4" cy="661.4" r="1.6" fill="#00785f"/></g><path d="M133.3,718.8 L143.7,728.6 M143.7,718.8 L133.3,728.6" stroke="#00785f" stroke-width="1.6"/><rect x="157.2" y="717.8" width="12.6" height="12.2" rx="0.8" fill="none" stroke="#333" stroke-width="1.5"/><g fill="#00785f"><circle cx="76.6" cy="717.1" r="2.4"/><circle cx="76.6" cy="723.5" r="2.4"/><circle cx="76.6" cy="729.9" r="2.4"/></g><rect x="1016.9" y="716.4" width="17.4" height="17.8" fill="#b2d235" stroke="#333" stroke-width="1.4"/><path d="M181.9,724.3000000000001 L185.1,714.1 L188.3,726.2 L191.5,717.9 L194.7,730.2 L198.5,723.5 L199.3,727.5" fill="none" stroke="#b9d43a" stroke-width="1.8" stroke-linejoin="round"/><g transform="translate(0,86)"><path d="M116.6,657.3 C112.8,657 109,658.8 106.8,662 L105.6,665.6 L107.9,668 L111.5,666.8 C114.8,664.6 116.8,661 116.6,657.3 Z" fill="none" stroke="#00785f" stroke-width="1.7" stroke-linejoin="round"/>
<path d="M100.9,665.8 L102.8,661.3 L107.4,661.1 L105.4,665.8 Z M108.3,672.9 L112.8,671 L112.8,666.4 L108.1,668.3 Z" fill="#00785f"/><path d="M104.3,666.5 L106.9,669.3" stroke="#00785f" stroke-width="1.6"/><circle cx="112.4" cy="661.4" r="1.6" fill="#00785f"/></g><path d="M133.3,746.8 L143.7,756.6 M143.7,746.8 L133.3,756.6" stroke="#00785f" stroke-width="1.6"/><rect x="157.2" y="745.8" width="12.6" height="12.2" rx="0.8" fill="none" stroke="#333" stroke-width="1.5"/><g fill="#00785f"><circle cx="76.6" cy="745.1" r="2.4"/><circle cx="76.6" cy="751.5" r="2.4"/><circle cx="76.6" cy="757.9" r="2.4"/></g><rect x="1016.9" y="744.4" width="17.4" height="17.8" fill="#768c5e" stroke="#333" stroke-width="1.4"/><path d="M181.9,752.3000000000001 L185.1,742.1 L188.3,754.2 L191.5,745.9 L194.7,758.2 L198.5,751.5 L199.3,755.5" fill="none" stroke="#7a8f60" stroke-width="1.8" stroke-linejoin="round"/><g transform="translate(0,114)"><path d="M116.6,657.3 C112.8,657 109,658.8 106.8,662 L105.6,665.6 L107.9,668 L111.5,666.8 C114.8,664.6 116.8,661 116.6,657.3 Z" fill="none" stroke="#00785f" stroke-width="1.7" stroke-linejoin="round"/>
<path d="M100.9,665.8 L102.8,661.3 L107.4,661.1 L105.4,665.8 Z M108.3,672.9 L112.8,671 L112.8,666.4 L108.1,668.3 Z" fill="#00785f"/><path d="M104.3,666.5 L106.9,669.3" stroke="#00785f" stroke-width="1.6"/><circle cx="112.4" cy="661.4" r="1.6" fill="#00785f"/></g><path d="M133.3,774.8 L143.7,784.6 M143.7,774.8 L133.3,784.6" stroke="#00785f" stroke-width="1.6"/><rect x="157.2" y="773.8" width="12.6" height="12.2" rx="0.8" fill="none" stroke="#333" stroke-width="1.5"/><g fill="#00785f"><circle cx="76.6" cy="773.1" r="2.4"/><circle cx="76.6" cy="779.5" r="2.4"/><circle cx="76.6" cy="785.9" r="2.4"/></g><rect x="1016.9" y="772.4" width="17.4" height="17.8" fill="#c2b22f" stroke="#333" stroke-width="1.4"/><path d="M181.9,780.3000000000001 L185.1,770.1 L188.3,782.2 L191.5,773.9 L194.7,786.2 L198.5,779.5 L199.3,783.5" fill="none" stroke="#c4b333" stroke-width="1.8" stroke-linejoin="round"/><g transform="translate(0,142)"><path d="M116.6,657.3 C112.8,657 109,658.8 106.8,662 L105.6,665.6 L107.9,668 L111.5,666.8 C114.8,664.6 116.8,661 116.6,657.3 Z" fill="none" stroke="#00785f" stroke-width="1.7" stroke-linejoin="round"/>
<path d="M100.9,665.8 L102.8,661.3 L107.4,661.1 L105.4,665.8 Z M108.3,672.9 L112.8,671 L112.8,666.4 L108.1,668.3 Z" fill="#00785f"/><path d="M104.3,666.5 L106.9,669.3" stroke="#00785f" stroke-width="1.6"/><circle cx="112.4" cy="661.4" r="1.6" fill="#00785f"/></g><path d="M133.3,802.8 L143.7,812.6 M143.7,802.8 L133.3,812.6" stroke="#00785f" stroke-width="1.6"/><rect x="157.2" y="801.8" width="12.6" height="12.2" rx="0.8" fill="none" stroke="#333" stroke-width="1.5"/><path d="M159.9,807.2 L163,810.2 L166.8,805.4" fill="none" stroke="#333" stroke-width="1.4"/><g fill="#00785f"><circle cx="76.6" cy="801.1" r="2.4"/><circle cx="76.6" cy="807.5" r="2.4"/><circle cx="76.6" cy="813.9" r="2.4"/></g><rect x="1016.9" y="800.4" width="17.4" height="17.8" fill="#79c2b5" stroke="#333" stroke-width="1.4"/><rect x="183.5" y="797.3" width="7" height="17.5" fill="#7cc4b8"/><rect x="191.5" y="797.3" width="7" height="17.5" fill="#7cc4b8"/><path d="M183.5,806.5 L186.5,799.0 L189,812.5 L193,801.5 L195.5,799.0 L198,812.5 L198.5,808.5" fill="none" stroke="#fff" stroke-width="1.1"/><path d="M41.6,815.5 L42.6,811.3 L53.6,801.0 L57,804.4 L46,814.7 Z M44.5,809.5 L54.4,800.3" fill="none" stroke="#00785f" stroke-width="1.7" stroke-linejoin="round"/><path d="M46.5,809.9 L51.5,805.3" stroke="#00785f" stroke-width="2.6" stroke-linecap="round"/><path d="M46.5,809.9 L51.5,805.3" stroke="#eef6f4" stroke-width="1" stroke-linecap="round"/></svg>
</body></html>
